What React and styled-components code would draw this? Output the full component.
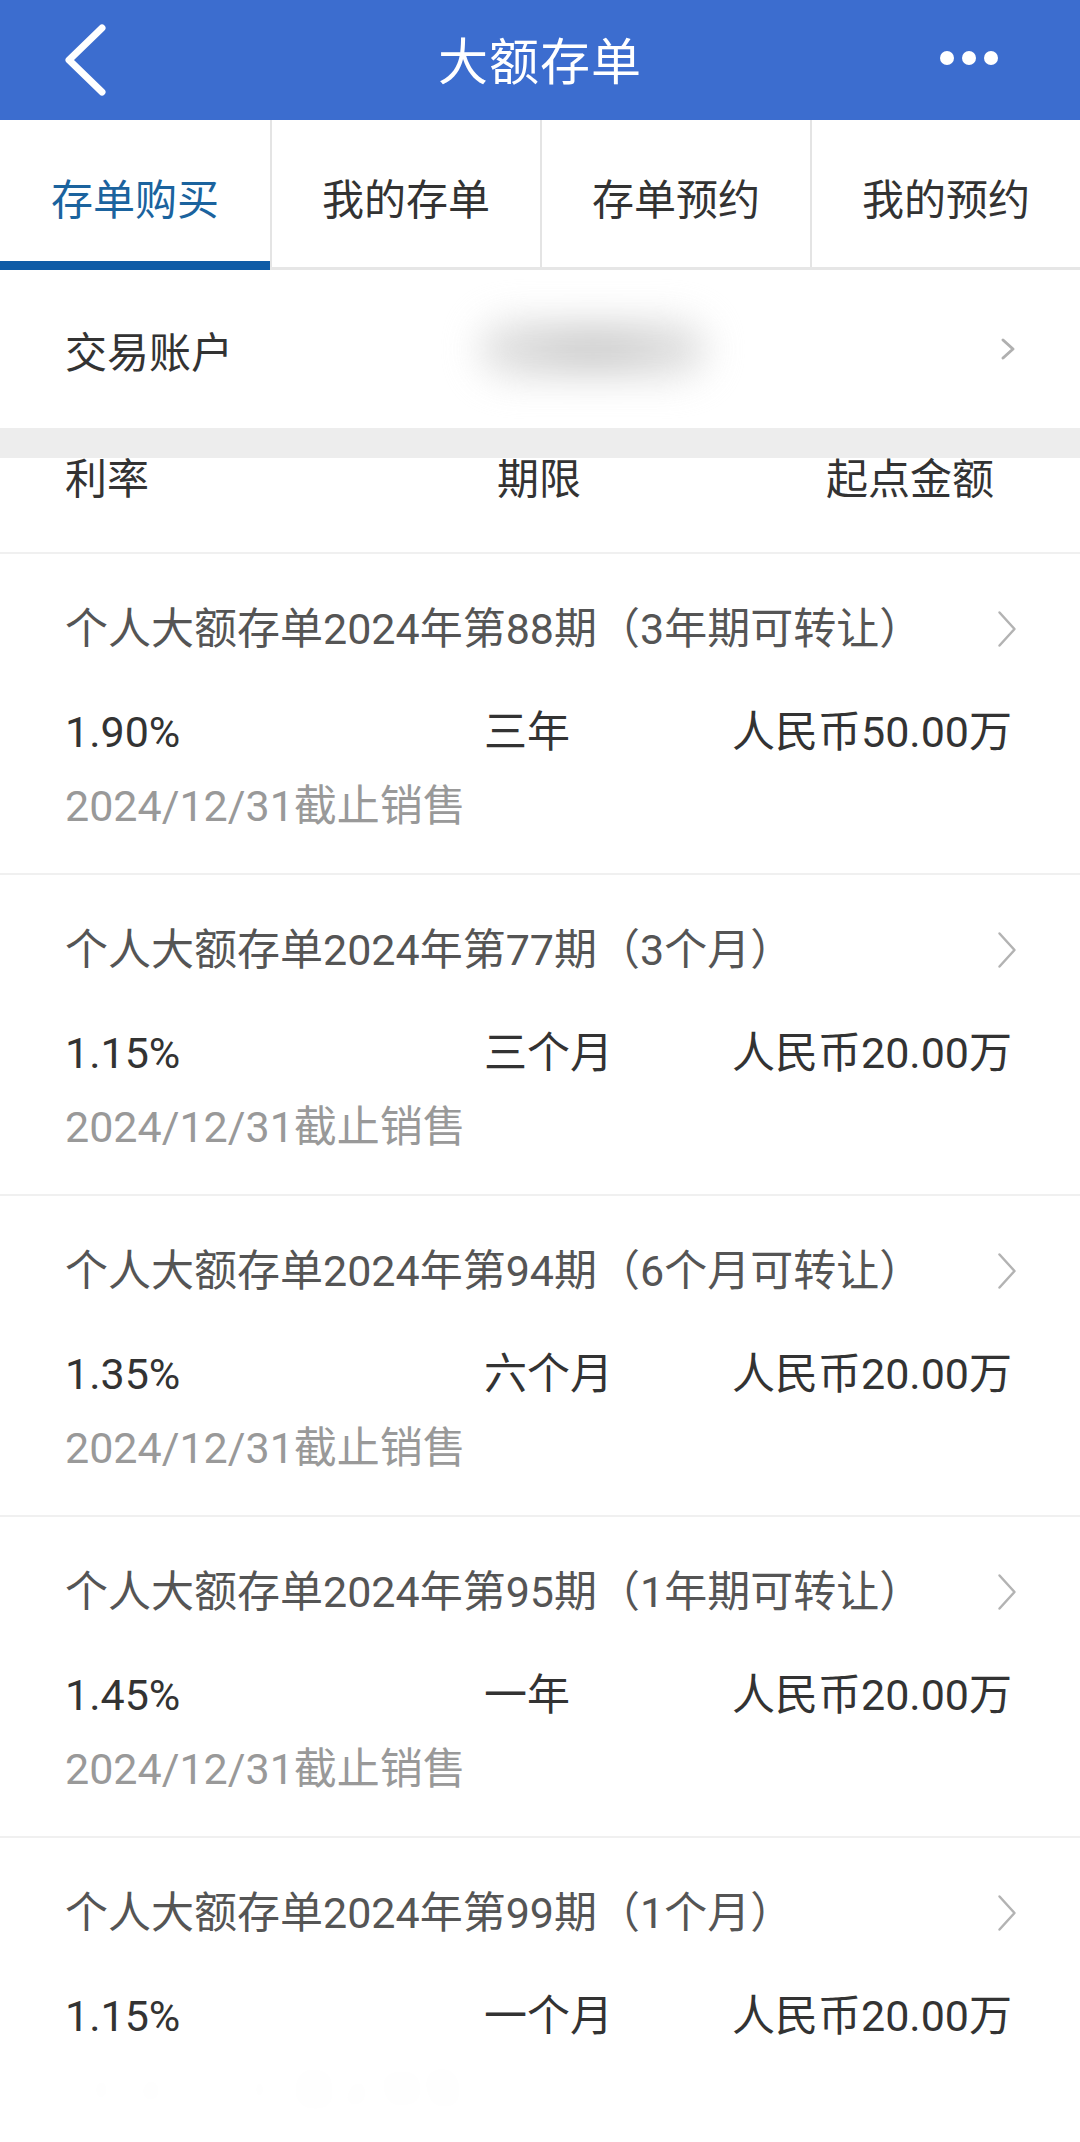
import React from 'react';
import styled, { createGlobalStyle } from 'styled-components';

const GlobalStyle = createGlobalStyle`
  * { box-sizing: border-box; }
  body {
    margin: 0;
    background: #ffffff;
    font-family: Roboto, "Noto Sans CJK SC", sans-serif;
    -webkit-font-smoothing: antialiased;
  }
`;

const Page = styled.div`
  width: 1080px;
  background: #ffffff;
`;

const Header = styled.header`
  height: 120px;
  background: #3c6dcf;
  display: grid;
  grid-template-columns: 160px 1fr 160px;
  align-items: center;
`;

const BackButton = styled.div`
  display: flex;
  align-items: center;
  padding-left: 60px;
  height: 100%;
`;

const Title = styled.h1`
  margin: 0;
  margin-top: -4px;
  text-align: center;
  color: #ffffff;
  font-size: 50px;
  font-weight: 400;
  letter-spacing: 1px;
`;

const MoreButton = styled.div`
  display: flex;
  justify-content: flex-end;
  align-items: center;
  gap: 8px;
  padding-right: 82px;
  margin-top: -4px;
`;

const Dot = styled.span`
  width: 14px;
  height: 14px;
  border-radius: 50%;
  background: #ffffff;
`;

const Tabs = styled.nav`
  display: grid;
  grid-template-columns: repeat(4, 1fr);
  height: 150px;
  border-bottom: 3px solid #e6e6e6;
`;

const Tab = styled.div`
  position: relative;
  display: flex;
  align-items: center;
  justify-content: center;
  padding-top: 6px;
  font-size: 42px;
  color: ${(p) => (p.$active ? '#1b639e' : '#333333')};
  border-left: ${(p) => (p.$first ? 'none' : '2px solid #e4e4e4')};
  &::after {
    content: '';
    position: absolute;
    left: 0;
    right: 0;
    bottom: -3px;
    height: 9px;
    background: ${(p) => (p.$active ? '#0f5ba6' : 'transparent')};
  }
`;

const AccountRow = styled.div`
  height: 158px;
  display: flex;
  align-items: center;
  padding: 0 64px 0 65px;
  font-size: 42px;
  color: #333333;
`;

const AccountLabel = styled.span`
  flex: none;
`;

const BlurredValue = styled.span`
  flex: none;
  margin-left: 245px;
  width: 230px;
  height: 60px;
  border-radius: 30px;
  background: radial-gradient(ellipse at center, #b8b8b8 0%, #d6d6d6 55%, #efefef 100%);
  filter: blur(18px);
  opacity: 0.8;
`;

const Spacer = styled.span`
  flex: 1;
`;

const Band = styled.div`
  height: 30px;
  background: #ededed;
`;

const ColumnHead = styled.div`
  height: 96px;
  display: grid;
  grid-template-columns: 432px 1fr auto;
  align-items: start;
  padding: 0 86px 0 65px;
  border-bottom: 2px solid #f0f0f0;
  font-size: 42px;
  line-height: 44px;
  color: #333333;
`;

const Item = styled.div`
  padding: 50px 63px 42px 65px;
  border-bottom: 2px solid #f0f0f0;
`;

const ItemTitle = styled.div`
  display: flex;
  align-items: center;
  justify-content: space-between;
  font-size: 43px;
  line-height: 50px;
  color: #555555;
`;

const ValueRow = styled.div`
  margin-top: 53px;
  display: grid;
  grid-template-columns: 419px 1fr auto;
  padding-right: 5px;
  font-size: 43px;
  line-height: 50px;
  color: #333333;
`;

const Deadline = styled.div`
  margin-top: 24px;
  font-size: 43px;
  line-height: 50px;
  color: ${(p) => (p.$hidden ? 'transparent' : '#999999')};
  text-shadow: ${(p) => (p.$hidden ? '0 0 18px rgba(0,0,0,0.015)' : 'none')};
`;

const Chevron = ({ w = 20, h = 38, stroke = '#b3b3b3', sw = 2.5 }) => (
  <svg width={w} height={h} viewBox={`0 0 ${w} ${h}`} fill="none">
    <path
      d={`M${sw} ${sw} L${w - sw} ${h / 2} L${sw} ${h - sw}`}
      stroke={stroke}
      strokeWidth={sw}
      strokeLinecap="round"
      strokeLinejoin="round"
    />
  </svg>
);

const BackIcon = () => (
  <svg width="48" height="72" viewBox="0 0 48 72" fill="none">
    <path d="M42 4 L9 36 L42 68" stroke="#ffffff" strokeWidth="7" strokeLinecap="round" strokeLinejoin="round" />
  </svg>
);

const tabs = ['存单购买', '我的存单', '存单预约', '我的预约'];

const products = [
  { name: '个人大额存单2024年第88期（3年期可转让）', rate: '1.90%', term: '三年', amount: '人民币50.00万' },
  { name: '个人大额存单2024年第77期（3个月）', rate: '1.15%', term: '三个月', amount: '人民币20.00万' },
  { name: '个人大额存单2024年第94期（6个月可转让）', rate: '1.35%', term: '六个月', amount: '人民币20.00万' },
  { name: '个人大额存单2024年第95期（1年期可转让）', rate: '1.45%', term: '一年', amount: '人民币20.00万' },
  { name: '个人大额存单2024年第99期（1个月）', rate: '1.15%', term: '一个月', amount: '人民币20.00万', hidden: true },
];

export default function App() {
  return (
    <Page>
      <GlobalStyle />
      <Header>
        <BackButton>
          <BackIcon />
        </BackButton>
        <Title>大额存单</Title>
        <MoreButton>
          <Dot />
          <Dot />
          <Dot />
        </MoreButton>
      </Header>

      <Tabs>
        {tabs.map((t, i) => (
          <Tab key={t} $active={i === 0} $first={i === 0}>
            {t}
          </Tab>
        ))}
      </Tabs>

      <AccountRow>
        <AccountLabel>交易账户</AccountLabel>
        <BlurredValue />
        <Spacer />
        <Chevron w={16} h={24} sw={3} stroke="#b0b0b0" />
      </AccountRow>

      <Band />

      <ColumnHead>
        <span>利率</span>
        <span>期限</span>
        <span>起点金额</span>
      </ColumnHead>

      {products.map((p) => (
        <Item key={p.name}>
          <ItemTitle>
            <span>{p.name}</span>
            <Chevron />
          </ItemTitle>
          <ValueRow>
            <span>{p.rate}</span>
            <span>{p.term}</span>
            <span>{p.amount}</span>
          </ValueRow>
          <Deadline $hidden={p.hidden}>2024/12/31截止销售</Deadline>
        </Item>
      ))}
    </Page>
  );
}
